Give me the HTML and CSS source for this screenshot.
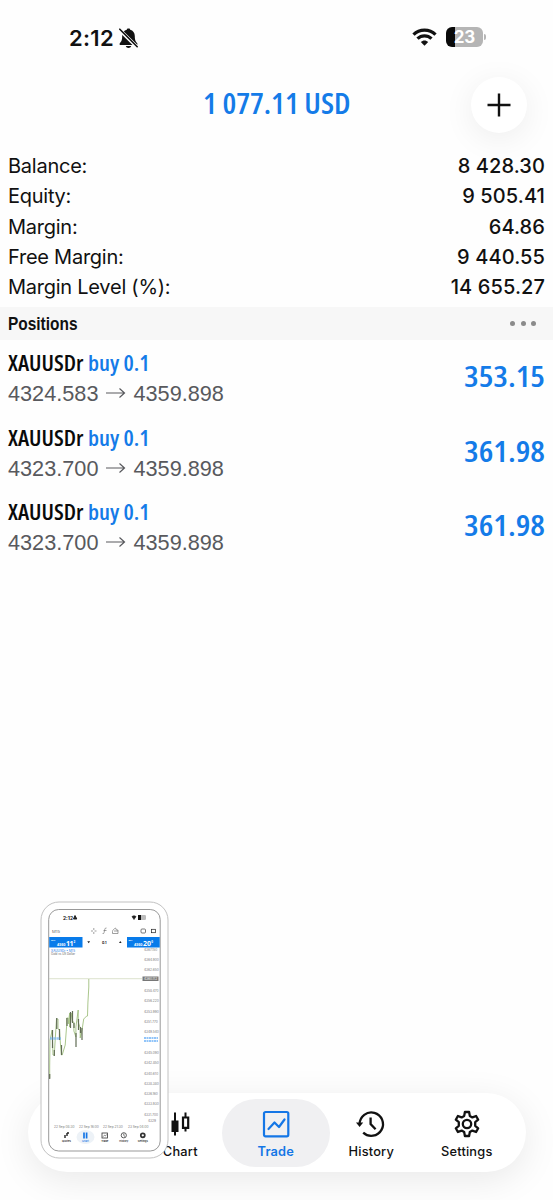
FILE: index.html
```html
<!DOCTYPE html>
<html lang="en">
<head>
<meta charset="utf-8">
<title>Trade</title>
<link rel="stylesheet" href="styles.css">
</head>
<body>
<div class="app">
  <div class="status">
    <div class="status-left">
      <span class="time">2:12</span>
      <svg class="bell" width="20" height="21" viewBox="0 0 20 21">
        <path d="M9.500.5c-1.200 0-1.700.5-1.700 1.300C5 2.600 3.200 4.900 3.200 8c0 4.500-1 5.500-2.500 7.300v1.700h17.600v-1.700C16.800 13.500 15.800 12.500 15.800 8c0-3.100-1.800-5.400-4.600-6.200C11.200 1 10.700.5 9.500.5zM6.800 18c.3 1.300 1.400 2 2.700 2s2.400-.7 2.700-2z" fill="#111"/>
        <path d="M0 1.300 18 19" stroke="#fff" stroke-width="3.600"/>
        <path d="M.8 1.200 18.200 18.700" stroke="#111" stroke-width="1.600" stroke-linecap="round"/>
      </svg>
    </div>
    <div class="status-right">
      <svg width="25" height="18" viewBox="0 0 25 18" fill="none" stroke="#111" stroke-width="3.200">
        <path d="M1.500 6.600C7.500.5 17.500.5 23.500 6.600"/>
        <path d="M5.500 10.700c3.900-3.900 10.100-3.900 14 0"/>
        <path d="M8.800 14.100c2.100-2.200 5.300-2.200 7.400 0L12.500 17.700z" fill="#111" stroke="none"/>
      </svg>
      <div class="battery"><span class="level">23</span></div>
      <i class="battery-tip"></i>
    </div>
  </div>

  <div class="header">
    <svg class="total" width="150" height="34"><text x="1" y="27" textLength="147.500" lengthAdjust="spacingAndGlyphs">1 077.11 USD</text></svg>
    <button class="add" aria-label="Add"><svg width="24" height="24" viewBox="0 0 24 24" stroke="#111" stroke-width="2.400"><path d="M12 .5v23M.5 12h23"/></svg></button>
  </div>

  <dl class="summary">
    <div class="line"><dt>Balance:</dt><dd>8 428.30</dd></div>
    <div class="line"><dt>Equity:</dt><dd>9 505.41</dd></div>
    <div class="line"><dt>Margin:</dt><dd>64.86</dd></div>
    <div class="line"><dt>Free Margin:</dt><dd>9 440.55</dd></div>
    <div class="line"><dt>Margin Level (%):</dt><dd>14 655.27</dd></div>
  </dl>

  <div class="section">
    <svg class="section-title" width="90" height="33"><text x="0" y="22.700" textLength="69.500" lengthAdjust="spacingAndGlyphs">Positions</text></svg>
    <div class="dots"><i></i><i></i><i></i></div>
  </div>

  <div class="positions">
    <div class="position">
      <div class="details">
        <svg class="name" width="160" height="30"><text class="symbol" x="0" y="21.500" textLength="75.500" lengthAdjust="spacingAndGlyphs">XAUUSDr</text><text class="side" x="80" y="21.500" textLength="61.500" lengthAdjust="spacingAndGlyphs">buy 0.1</text></svg>
        <div class="prices">4324.583<svg width="20" height="12" viewBox="0 0 20 12"><path d="M0 6h18.500M13.500 1.500 18.500 6l-5 4.500"/></svg>4359.898</div>
      </div>
      <svg class="profit" width="82" height="34"><text x="1" y="27" textLength="81" lengthAdjust="spacingAndGlyphs">353.15</text></svg>
    </div>
    <div class="position">
      <div class="details">
        <svg class="name" width="160" height="30"><text class="symbol" x="0" y="21.500" textLength="75.500" lengthAdjust="spacingAndGlyphs">XAUUSDr</text><text class="side" x="80" y="21.500" textLength="61.500" lengthAdjust="spacingAndGlyphs">buy 0.1</text></svg>
        <div class="prices">4323.700<svg width="20" height="12" viewBox="0 0 20 12"><path d="M0 6h18.500M13.500 1.500 18.500 6l-5 4.500"/></svg>4359.898</div>
      </div>
      <svg class="profit" width="82" height="34"><text x="1" y="27" textLength="81" lengthAdjust="spacingAndGlyphs">361.98</text></svg>
    </div>
    <div class="position">
      <div class="details">
        <svg class="name" width="160" height="30"><text class="symbol" x="0" y="21.500" textLength="75.500" lengthAdjust="spacingAndGlyphs">XAUUSDr</text><text class="side" x="80" y="21.500" textLength="61.500" lengthAdjust="spacingAndGlyphs">buy 0.1</text></svg>
        <div class="prices">4323.700<svg width="20" height="12" viewBox="0 0 20 12"><path d="M0 6h18.500M13.500 1.500 18.500 6l-5 4.500"/></svg>4359.898</div>
      </div>
      <svg class="profit" width="82" height="34"><text x="1" y="27" textLength="81" lengthAdjust="spacingAndGlyphs">361.98</text></svg>
    </div>
  </div>

  <nav class="tabs">
    <div class="tab tab-blank"></div>
    <div class="tab">
      <svg width="28" height="28" viewBox="0 0 28 28"><path d="M9 2.500v23M19.500 2.500v19" stroke="#111" stroke-width="2"/><path d="M5.500 10.500h7V22h-7z" fill="#111"/><path d="M17 7.500h5.200v10.300H17z" fill="#fff" stroke="#111" stroke-width="2.200"/></svg>
      <span>Chart</span>
    </div>
    <div class="tab active">
      <svg width="28" height="28" viewBox="0 0 28 28" fill="none" stroke="#1476e6" stroke-width="2.200" stroke-linejoin="round" stroke-linecap="round"><rect x="2" y="2" width="24.300" height="24.300" rx="1.500"/><path d="m6.500 19 6-6.500 4.500 4.500L22.500 9.500"/></svg>
      <span>Trade</span>
    </div>
    <div class="tab">
      <svg width="28" height="28" viewBox="0 0 28 28" fill="none" stroke="#111" stroke-width="2.300"><path d="M2.600 14A11.700 11.700 0 1 1 6.200 22.600"/><path d="M-1 12.500h7.200l-3.600 4.600z" fill="#111" stroke="none"/><path d="M13.600 7.500V14l5 5.200"/></svg>
      <span>History</span>
    </div>
    <div class="tab">
      <svg width="28" height="28" viewBox="0 0 28 28" fill="none" stroke="#111" stroke-width="2.300" stroke-linejoin="round"><path d="M11.900 2h4.200l.7 3.900 2.600 1.500 3.700-1.400 2.100 3.700-3 2.500v3.600l3 2.500-2.100 3.700-3.700-1.400-2.600 1.500-.7 3.900h-4.200l-.7-3.900-2.600-1.500L4.900 22l-2.100-3.700 3-2.500v-3.600l-3-2.500L4.900 6l3.700 1.400 2.600-1.500z"/><circle cx="14" cy="14" r="4.200"/></svg>
      <span>Settings</span>
    </div>
  </nav>

  <svg class="preview" width="130" height="258" viewBox="40 901 130 258">
    <rect x="41" y="902" width="127" height="256" rx="18" fill="#fff" stroke="#c2c2c2"/>
    <rect x="48.700" y="909.500" width="111.500" height="241.500" rx="10" fill="#fff" stroke="#999" stroke-width="1"/>
    <g class="mini-bold"><text x="63" y="920" textLength="10" lengthAdjust="spacingAndGlyphs">2:12</text></g>
    <path d="m73.500 919 1.500-3.500 1.800 3.500z" fill="#222" stroke="#222"/>
    <path d="M132 916.500q2-1.500 4 0l-2 3z" fill="#222" stroke="#222" stroke-width=".7"/>
    <rect x="138" y="915" width="8" height="5" rx="1.200" fill="#bbb"/><path d="M138 915h3v5h-3z" fill="#111"/>
    <g class="mini"><text x="52" y="932.500" textLength="8" lengthAdjust="spacingAndGlyphs">M15</text></g>
    <g stroke="#777" stroke-width=".7" fill="none">
      <path d="M91 931h2m1.500 0h2M93.800 928v2m0 2v2"/>
      <path d="M106.500 928q-1.500-.3-1.800 1.500l-.6 3q-.2 1.500-1.500 1M103.500 930.500h3"/>
      <path d="M112.500 931.500c0-1.500 1.500-2.500 3-3.500l1 2h1.500v3.500h-5.500zM114 931h4"/>
      <rect x="141" y="929" width="4.500" height="4" rx="1" stroke="#444"/><rect x="151.500" y="929.300" width="4" height="3.400" stroke="#222"/>
    </g>
    <path d="M49.200 937h33.300v10.600H49.200zM127 937h32.700v10.600H127z" fill="#087bea"/>
    <g class="mini-quote"><text x="57" y="945.500" font-size="4" textLength="8.500" lengthAdjust="spacingAndGlyphs">4360</text><text x="66" y="945.700" font-size="7" textLength="7.500">11</text><text x="73.500" y="942.500" font-size="3">2</text><text x="134" y="945.500" font-size="4" textLength="8.500" lengthAdjust="spacingAndGlyphs">4360</text><text x="143" y="945.700" font-size="7" textLength="8">20</text><text x="151.300" y="942.500" font-size="3">0</text><text x="51" y="940.500" font-size="2">SELL</text><text x="128.500" y="940.500" font-size="2">BUY</text></g>
    <path d="m87.300 941.200 1.400 2 1.400-2zM119 943l1.300-2 1.300 2z" fill="#222"/>
    <g class="mini-bold"><text class="lot" x="102" y="943.700">0.1</text></g>
    <g font-size="3"><text class="mini-blue" x="51" y="951.800" textLength="24">XAUUSDr • M15</text><text class="mini" x="51" y="955" textLength="24" lengthAdjust="spacingAndGlyphs">Gold vs US Dollar</text></g>
    <path d="M49 978.700h93" stroke="#cdd6b9" stroke-width=".7"/>
    <path d="M49.700 1078v-12l.3-26 2.200-10 .8 25h1.500v-4l2-32h1.500v10l1.500 1 1 15 1 10h.7l3-10 1.500-20v-7h1.500v6l1.500-11v14l1.500-14 1 9h1.700v9l2 6v-10l2.300-17v12l2 6v10l2-9 1.500-10 3-3h.8l.4-13 .9-16V979" fill="none" stroke="#a0c07f" stroke-width=".9"/>
    <path d="M49.700 1074v5M52.500 1030v18M54.300 1050v6M56.700 1018v11M59.500 1029v11M61.500 1045v10M67 1018v8M70.500 1012v16M72.500 1011v12M74 1023v5M76 1033v14M78.500 1019v11M80.500 1027v6M82 1028v12" stroke="#626d55" stroke-width="1.200"/>
    <path d="M50 1038.500h11" stroke="#72b5f8" stroke-width="2.600" stroke-dasharray="2.500 .7" opacity=".7"/>
    <g class="mini-axis">
      <text x="144" y="951">4367.150</text><text x="144" y="961.200">4364.900</text><text x="144" y="971.400">4362.650</text><text x="144" y="991.800">4358.470</text><text x="144" y="1002.200">4356.220</text><text x="144" y="1012.600">4353.990</text><text x="144" y="1022.900">4351.770</text><text x="144" y="1033.200">4349.540</text><text x="144" y="1053.700">4345.090</text><text x="144" y="1064.100">4342.850</text><text x="144" y="1074.500">4340.610</text><text x="144" y="1084.800">4338.380</text><text x="144" y="1095.100">4336.160</text><text x="144" y="1105.400">4333.930</text><text x="144" y="1115.600">4331.700</text><text x="148" y="1121.500">4329</text>
      <text x="54" y="1128">22 Sep 08:30</text><text x="79" y="1128">22 Sep 16:00</text><text x="103" y="1128">22 Sep 21:30</text><text x="128" y="1128">23 Sep 04:00</text>
    </g>
    <rect x="142.500" y="976.500" width="16" height="4.500" fill="#777"/>
    <g class="mini-axis-light"><text x="144" y="980">4360.112</text></g>
    <path d="M144 1038h14M144 1041h14" stroke="#6fb3f7" stroke-width="1.500" stroke-dasharray="2 .5"/>
    <ellipse cx="85.500" cy="1137" rx="9" ry="7" fill="#edf2f7"/>
    <path d="M65 1138v-3m2 1v-3m0 0h2" stroke="#222" stroke-width="1.400"/>
    <path d="M84 1132.500v6m2.600-6v6" stroke="#1476e6" stroke-width="1.700"/>
    <rect x="102" y="1133" width="5.500" height="5" fill="none" stroke="#333" stroke-width=".8"/><path d="m103 1136.700 1.500-1.500 1 .7 1.300-1.500" fill="none" stroke="#333" stroke-width=".6"/>
    <circle cx="123.800" cy="1135.300" r="2.600" fill="none" stroke="#333" stroke-width=".8"/><path d="M123.800 1133.500v2l1.200 1" fill="none" stroke="#333" stroke-width=".7"/>
    <circle cx="142.800" cy="1135.300" r="2" fill="none" stroke="#333" stroke-width="1.700"/>
    <g class="mini-tab"><text x="66.500" y="1142.200">Quotes</text><text x="85.500" y="1142.200" class="mini-blue">Chart</text><text x="104.800" y="1142.200">Trade</text><text x="123.800" y="1142.200">History</text><text x="142.800" y="1142.200">Settings</text></g>
  </svg>
</div>
</body>
</html>
```

FILE: styles.css
```css
* { box-sizing: border-box; }
body { margin: 0; background: #fff; color: #111; font-family: Inter, "Liberation Sans", sans-serif; }
.app { position: relative; width: 553px; height: 1200px; overflow: hidden; display: flex; flex-direction: column; background: #fefefe; }
svg { display: block; flex: none; overflow: visible; }

.status { height: 76px; flex: none; display: flex; justify-content: space-between; padding: 24px 67px 0 69px; }
.status-left, .status-right { display: flex; align-items: center; height: 28px; }
.time { font-size: 22px; font-weight: 600; line-height: 28px; letter-spacing: .3px; width: 50px; }
.status-right { height: 26px; }
.battery { display: flex; align-items: center; justify-content: center; width: 37px; height: 20px; margin-left: 9px; border-radius: 6px; background: linear-gradient(90deg, #0a0a0a 9px, #b5b5b5 9px); }
.level { color: #fff; font-size: 17px; font-weight: 700; line-height: 20px; }
.battery-tip { width: 2px; height: 6px; margin-left: 1px; border-radius: 0 2px 2px 0; background: #b5b5b5; }

.header { height: 75px; flex: none; display: grid; grid-template-columns: 1fr 150px 1fr; align-items: start; }
.total { grid-column: 2; margin-top: 11px; }
.total text, .profit text { font: 600 28px "Open Sans", sans-serif; font-stretch: 80%; fill: #147be8; }
.add { justify-self: end; width: 56px; height: 56px; margin: 1px 26px 0 0; padding: 0; display: grid; place-items: center; border: 0; border-radius: 50%; background: #fff; box-shadow: 0 6px 32px rgba(0,0,0,.07); }

.summary { flex: none; height: 155.500px; margin: 0; padding: 0 8px; }
.line { display: flex; justify-content: space-between; height: 30.250px; line-height: 30.250px; font-size: 20px; }
.line dt { letter-spacing: -.25px; }
.line dd { margin: 0; font-weight: 500; letter-spacing: .1px; }

.section { flex: none; display: flex; align-items: center; justify-content: space-between; height: 33.500px; padding: 0 17px 0 8px; background: #f7f7f7; }
.section-title text { font: 700 19px "Liberation Sans", sans-serif; fill: #111; }
.dots { display: flex; gap: 5.500px; }
.dots i { width: 5px; height: 5px; border-radius: 50%; background: #8b8b8b; }

.positions { padding: 9px 8px 0; }
.position { display: flex; justify-content: space-between; height: 74.500px; }
.name text { font: 600 22px "Open Sans", sans-serif; font-stretch: 80%; }
.name .symbol { fill: #0a0a0a; font-weight: 650; }
.name .side { fill: #147be8; }
.prices { display: flex; align-items: center; height: 30px; font: 21.700px/30px "Liberation Sans", sans-serif; color: #58595d; }
.prices svg { margin: -2px 7px 0 8px; fill: none; stroke: #58595d; stroke-width: 1.200; }
.profit { margin-top: 11px; }

.tabs { flex: none; margin: auto 27px 28px 28px; width: 498px; height: 79px; display: flex; align-items: center; border-radius: 40px; background: #fff; box-shadow: 0 8px 36px rgba(0,0,0,.085); }
.tab { flex: none; width: 95.500px; height: 68px; padding-top: 11px; display: flex; flex-direction: column; align-items: center; font-size: 12.800px; font-weight: 500; letter-spacing: .2px; }
.tab span { line-height: 16px; margin-top: 6px; }
.tab-blank { width: 104.500px; }
.active { width: 108.500px; margin: 0 -6.500px; border-radius: 34px; background: #f0f0f2; color: #1476e6; font-weight: 600; }

.preview { position: absolute; left: 40px; top: 901px; }
.mini { font: 3.300px Inter, sans-serif; fill: #666; }
.mini-bold { font: 700 4.500px Inter, sans-serif; fill: #111; }
.lot { font-size: 3.500px; }
.mini-quote { font-family: "Open Sans", sans-serif; font-weight: 700; fill: #fff; }
.mini-blue { font-family: Inter, sans-serif; fill: #1476e6; }
.mini-axis { font: 3.200px Inter, sans-serif; fill: #777; }
.mini-axis-light { font: 3.200px Inter, sans-serif; fill: #fff; }
.mini-tab { font: 500 2.600px Inter, sans-serif; text-anchor: middle; }
```
